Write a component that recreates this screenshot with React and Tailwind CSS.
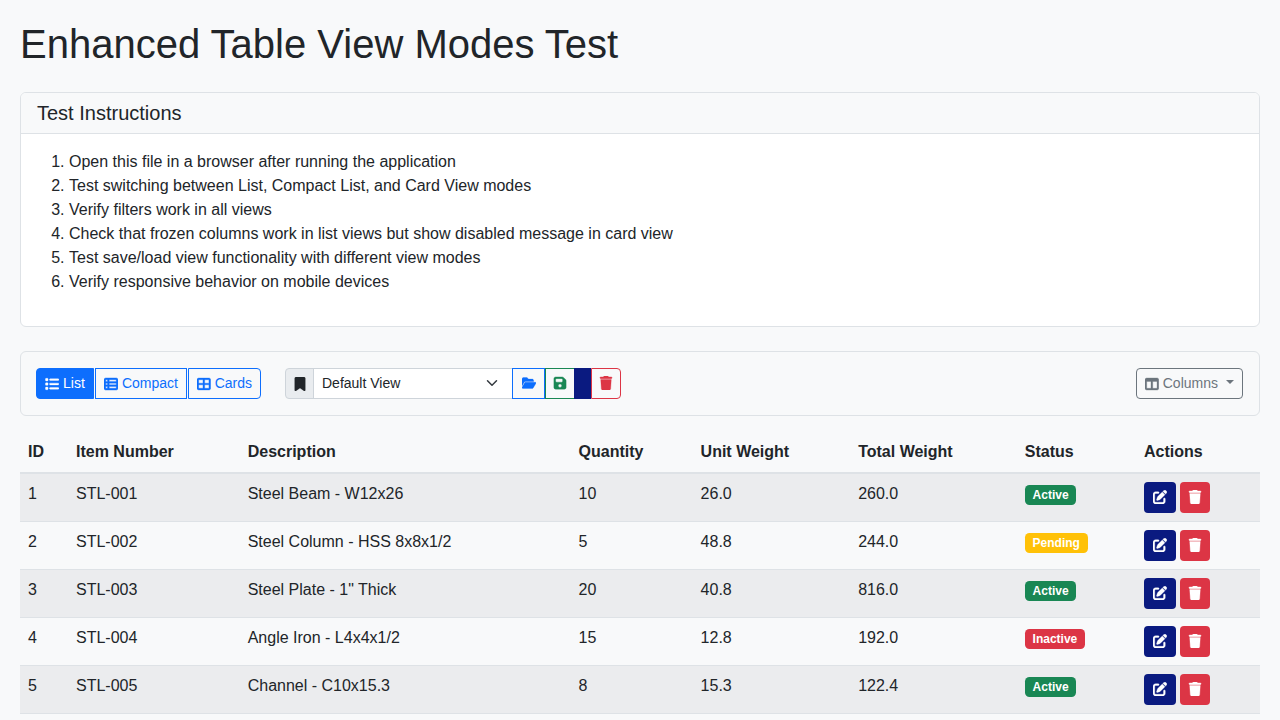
import React from "react";
import { FaList, FaTableList, FaTableCellsLarge, FaBookmark, FaFolderOpen, FaFloppyDisk, FaTrash, FaPenToSquare, FaTableColumns } from "react-icons/fa6";

const steps = [
  "Open this file in a browser after running the application",
  "Test switching between List, Compact List, and Card View modes",
  "Verify filters work in all views",
  "Check that frozen columns work in list views but show disabled message in card view",
  "Test save/load view functionality with different view modes",
  "Verify responsive behavior on mobile devices",
];

const rows = [
  [1, "STL-001", "Steel Beam - W12x26", "10", "26.0", "260.0", "Active"],
  [2, "STL-002", "Steel Column - HSS 8x8x1/2", "5", "48.8", "244.0", "Pending"],
  [3, "STL-003", 'Steel Plate - 1" Thick', "20", "40.8", "816.0", "Active"],
  [4, "STL-004", "Angle Iron - L4x4x1/2", "15", "12.8", "192.0", "Inactive"],
  [5, "STL-005", "Channel - C10x15.3", "8", "15.3", "122.4", "Active"],
];

const badgeClass = {
  Active: "bg-[#198754] text-white",
  Pending: "bg-[#ffc107] text-white",
  Inactive: "bg-[#dc3545] text-white",
};

const heads = [
  ["ID", "w-[48px]"],
  ["Item Number", "w-[171.7px]"],
  ["Description", "w-[330.9px]"],
  ["Quantity", "w-[122px]"],
  ["Unit Weight", "w-[157.6px]"],
  ["Total Weight", "w-[166.6px]"],
  ["Status", "w-[119.2px]"],
  ["Actions", "w-[124px]"],
];

const Icon = ({ as: C }) => <C className="h-3.5 w-auto" strokeWidth={12} />;
const RowIcon = ({ as: C }) => <C className="mb-[2px] h-3.5 w-auto" strokeWidth={12} />;

export default function App() {
  return (
    <div className="h-screen overflow-hidden bg-[#f8f9fa] p-5 font-['Liberation_Sans',Arial,sans-serif] text-base leading-6 text-[#212529]">
      <h1 className="mb-6 text-[40px] leading-[48px] font-medium">Enhanced Table View Modes Test</h1>

      <section className="mb-6 overflow-hidden rounded-md border border-[#dee2e6] bg-white">
        <h5 className="border-b border-[#dee2e6] bg-[#f8f9fa] px-4 py-2 text-[20px] leading-6 font-medium">Test Instructions</h5>
        <div className="p-4">
          <ol className="mb-4 list-decimal pl-8">
            {steps.map((s) => (
              <li key={s}>{s}</li>
            ))}
          </ol>
        </div>
      </section>

      <section className="mb-4 flex items-center justify-between rounded-md border border-[#dee2e6] bg-[#f8f9fa] py-4 pr-4 pl-[15px]">
        <div className="flex items-center gap-6">
          <div className="flex gap-px text-sm leading-[21px]">
            <button className="flex h-[31px] w-[58px] items-center gap-1 rounded-l border border-[#0d6efd] bg-[#0d6efd] px-2 text-white">
              <Icon as={FaList} /> List
            </button>
            <button className="flex h-[31px] w-[92px] items-center gap-1 border border-[#0d6efd] px-2 text-[#0d6efd]">
              <Icon as={FaTableList} /> Compact
            </button>
            <button className="flex h-[31px] w-[73px] items-center gap-1 rounded-r border border-[#0d6efd] px-2 text-[#0d6efd]">
              <Icon as={FaTableCellsLarge} /> Cards
            </button>
          </div>
          <div className="flex text-sm leading-[21px]">
            <span className="flex h-[31px] w-[29px] items-center justify-center rounded-l border border-[#ced4da] bg-[#e9ecef]">
              <Icon as={FaBookmark} />
            </span>
            <div className="relative -ml-px flex h-[31px] w-[199px] items-center border-y border-l border-[#ced4da] bg-white pl-2">
              Default View
              <svg className="absolute top-[8px] right-[14px] size-3" viewBox="0 0 16 16" fill="none" stroke="#343a40" strokeWidth="2" strokeLinecap="round" strokeLinejoin="round">
                <path d="m2 5 6 6 6-6" />
              </svg>
            </div>
            <button className="flex h-[31px] w-[33px] items-center justify-center border border-[#0d6efd] text-[#0d6efd]">
              <RowIcon as={FaFolderOpen} />
            </button>
            <button className="flex h-[31px] w-[30px] items-center justify-center border border-[#198754] text-[#198754]">
              <RowIcon as={FaFloppyDisk} />
            </button>
            <button className="-ml-px h-[31px] w-[17px] border border-[#0a1a80] bg-[#0a1a80]" aria-label="Blank" />
            <button className="flex h-[31px] w-[30px] items-center justify-center rounded-r border border-[#dc3545] text-[#dc3545]">
              <RowIcon as={FaTrash} />
            </button>
          </div>
        </div>
        <button className="flex h-[31px] w-[107px] items-center gap-1 rounded border border-[#6c757d] px-2 text-sm leading-[21px] text-[#6c757d]">
          <Icon as={FaTableColumns} /> Columns
          <span className="mb-[3px] ml-1 h-0 w-0 border-x-[4.2px] border-t-[4.2px] border-x-transparent border-t-[#6c757d]" />
        </button>
      </section>

      <table className="w-[1240px] table-fixed border-collapse">
        <thead>
          <tr className="border-b-2 border-[#dee2e6]">
            {heads.map(([h, w]) => (
              <th key={h} className={`${w} p-2 text-left font-bold`}>{h}</th>
            ))}
          </tr>
        </thead>
        <tbody>
          {rows.map((r, i) => (
            <tr key={r[0]} className={`border-b border-[#dee2e6] ${i % 2 === 0 ? "bg-[#ebecee]" : ""}`}>
              {r.slice(0, 6).map((c, j) => (
                <td key={j} className="h-[47px] p-2 align-top">{c}</td>
              ))}
              <td className="p-2 align-top">
                <span className={`mt-[3px] inline-block rounded-[4.5px] px-[7.8px] py-[4.2px] text-xs leading-3 font-bold ${badgeClass[r[6]]}`}>{r[6]}</span>
              </td>
              <td className="p-2 align-top">
                <div className="flex gap-1">
                  <button className="flex h-[31px] w-8 items-center justify-center rounded bg-[#0a1a80] text-white">
                    <RowIcon as={FaPenToSquare} />
                  </button>
                  <button className="flex h-[31px] w-[30px] items-center justify-center rounded bg-[#dc3545] text-white">
                    <RowIcon as={FaTrash} />
                  </button>
                </div>
              </td>
            </tr>
          ))}
        </tbody>
      </table>
    </div>
  );
}
